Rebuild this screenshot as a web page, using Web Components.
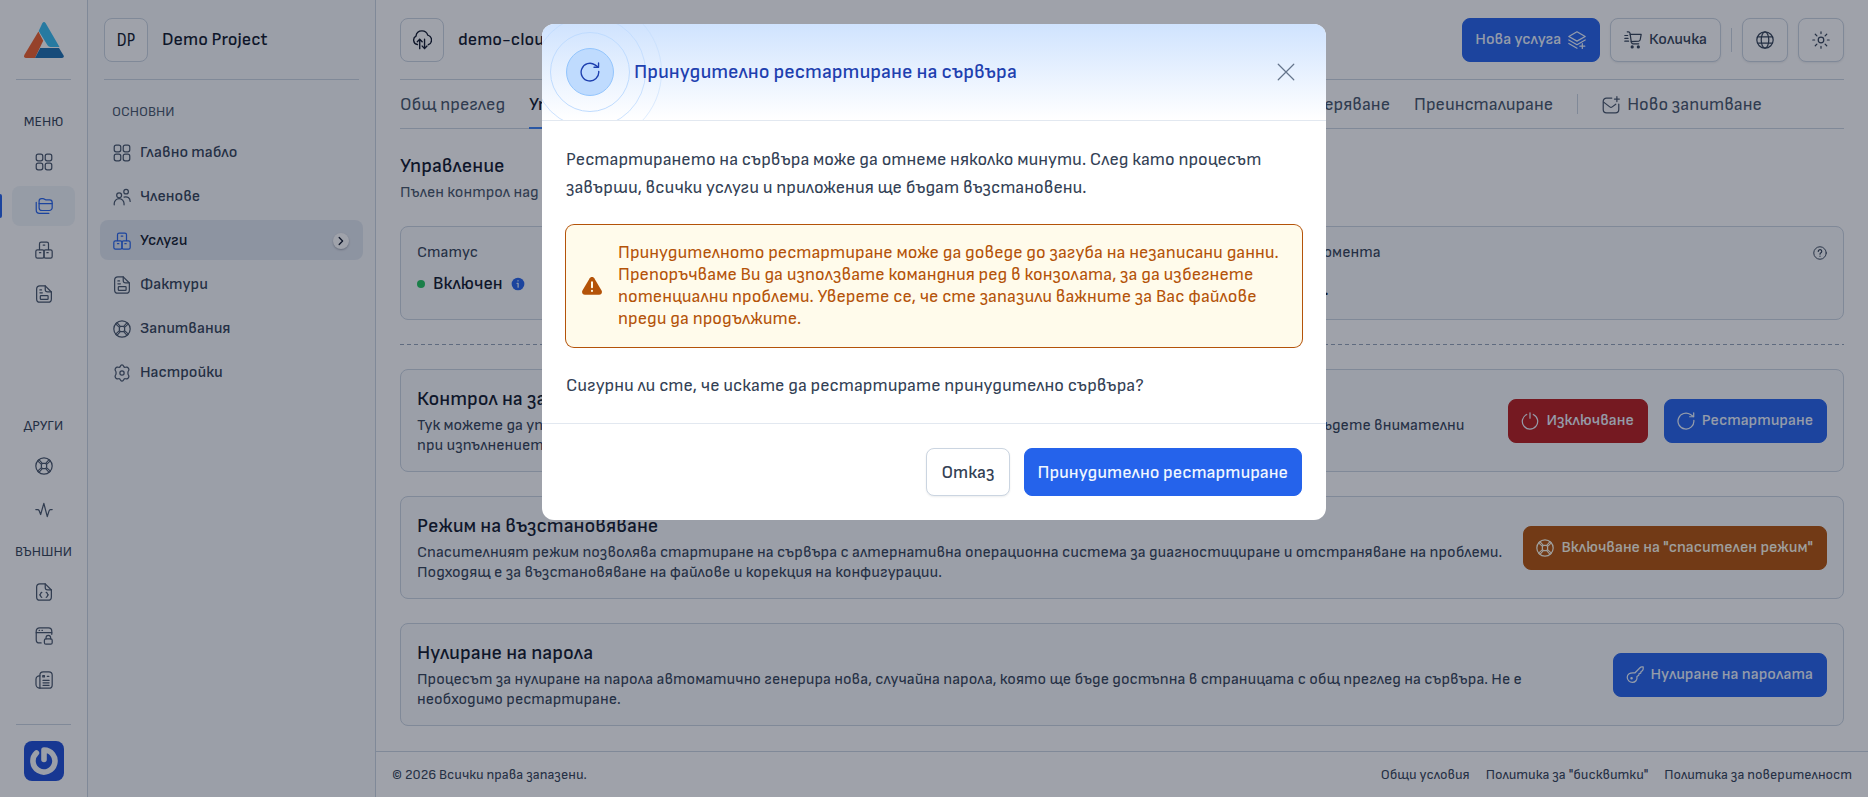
<!DOCTYPE html>
<html lang="bg">
<head>
<meta charset="utf-8">
<title>Demo Project – Управление</title>
<style>
  :root {
    --slate-50: #f8fafc; --slate-200: #e2e8f0; --slate-300: #cbd5e1; --slate-500: #64748b;
    --slate-600: #475569; --slate-700: #334155; --slate-900: #0f172a;
    --blue: #2563eb; --red: #b91c1c; --amber: #b45309;
  }
  body {
    margin: 0; background: #fff; color: var(--slate-700);
    font: 400 16px/20px "Sofia Sans", Roboto, "Noto Sans", sans-serif;
  }
</style>
</head>
<body>
<app-shell></app-shell>
<confirm-dialog heading="Принудително рестартиране на сървъра">
  <p>Рестартирането на сървъра може да отнеме няколко минути. След като процесът завърши, всички услуги и приложения ще бъдат възстановени.</p>
  <alert-box>Принудителното рестартиране може да доведе до загуба на незаписани данни. Препоръчваме Ви да използвате командния ред в конзолата, за да избегнете потенциални проблеми. Уверете се, че сте запазили важните за Вас файлове преди да продължите.</alert-box>
  <p>Сигурни ли сте, че искате да рестартирате принудително сървъра?</p>
  <ui-button slot="actions" size="lg">Отказ</ui-button>
  <ui-button slot="actions" size="lg" tone="blue">Принудително рестартиране</ui-button>
</confirm-dialog>

<script>
const ICONS = {
  grid: '<rect x="2.5" y="2.5" width="8" height="8" rx="2.4"/><rect x="13.5" y="2.5" width="8" height="8" rx="2.4"/><rect x="2.5" y="13.5" width="8" height="8" rx="2.4"/><rect x="13.5" y="13.5" width="8" height="8" rx="2.4"/>',
  users: '<circle cx="8.5" cy="10" r="3"/><circle cx="17" cy="5.5" r="2.8"/><path d="M2.5 21.5v-1.5a6 6 0 0 1 12 0v1.5"/><path d="M14.5 12.2c4-1.4 7.5 1 7.5 5.3"/>',
  boxes: '<path d="M6.5 11.5V4.5a2 2 0 0 1 2-2h7a2 2 0 0 1 2 2v7"/><path d="M11 6h2"/><rect x="2" y="11.8" width="10" height="10" rx="2"/><rect x="12" y="11.8" width="10" height="10" rx="2"/><path d="M6.5 15.3h1.6M15.5 15.3h1.6"/>',
  invoice: '<path d="M13.5 2H7a4 4 0 0 0-4 4v12a4 4 0 0 0 4 4h10a4 4 0 0 0 4-4V9.5z"/><path d="M13.5 2v4.500a3 3 0 0 0 3 3H21"/><rect x="7.500" y="14" width="9.500" height="4.500" rx=".8"/><path d="M7 7h2M7 10.500h3"/>',
  buoy: '<circle cx="12" cy="12" r="10"/><rect x="8.800" y="8.800" width="6.400" height="6.400" rx="2"/><path d="M5.800 4.200l4.200 4.600M4.200 5.800l4.600 4.200M18.200 4.200L14 8.800M19.800 5.800L15.200 10M5.800 19.800l4.200-4.600M4.200 18.200L8.800 14M18.200 19.800L14 15.200M19.800 18.200L15.200 14" stroke-width="1.300"/>',
  gear: '<path d="M12 2.200c1 0 1.600.5 2 1.500.3.900 1.300 1.500 2.300 1.300l1-.2c1-.2 1.800.2 2.400 1.200l.5.900c.5 1 .4 1.800-.3 2.500-.9.900-.9 4.300 0 5.200.7.700.8 1.500.3 2.500l-.5.900c-.6 1-1.400 1.400-2.400 1.200l-1-.2c-1-.2-2 .4-2.300 1.300-.4 1-1 1.500-2 1.500s-1.600-.5-2-1.500c-.3-.9-1.300-1.500-2.300-1.300l-1 .2c-1 .2-1.800-.2-2.400-1.200l-.5-.9c-.5-1-.4-1.800.3-2.500.9-.9.900-4.300 0-5.200-.7-.7-.8-1.500-.3-2.500l.5-.9c.6-1 1.400-1.400 2.400-1.200l1 .2c1 .2 2-.4 2.300-1.300.4-1 1-1.500 2-1.500z"/><circle cx="12" cy="12" r="2.600"/>',
  folders: '<path d="M6 9.500V6a3 3 0 0 1 3-3h1.800c1.800 0 2 1.600 3.600 1.600H19a3 3 0 0 1 3 3V14a3.500 3.500 0 0 1-3.500 3.500h-9A3.500 3.500 0 0 1 6 14z"/><path d="M6 9h16"/><path d="M2.500 7.500V17a4 4 0 0 0 4 4H18"/>',
  pulse: '<path d="M2 11.500h2.200c.9 0 1.500.4 1.800 1.200l1.900 4.800L11.800 4l4.200 16 2.200-7c.3-1 .9-1.500 1.800-1.500h2"/>',
  code: '<path d="M13.500 2H7a4 4 0 0 0-4 4v12a4 4 0 0 0 4 4h10a4 4 0 0 0 4-4V9.500z"/><path d="M13.500 2v4.500a3 3 0 0 0 3 3H21"/><path d="M9.300 12.500c-1.500 0-1 2.200-2.500 3 1.500.8 1 3 2.500 3M14.700 12.500c1.500 0 1 2.200 2.500 3-1.500.8-1 3-2.500 3"/>',
  winlock: '<path d="M8.500 20.500H6.500a4 4 0 0 1-4-4V6a4 4 0 0 1 4-4h11a4 4 0 0 1 4 4v4"/><path d="M2.500 8h19M6 5h.6M9.500 5h.6"/><rect x="12.500" y="15.500" width="9.500" height="6.500" rx="1.800"/><path d="M14.500 15.500V14a2.800 2.800 0 0 1 5.600 0v1.500"/>',
  news: '<path d="M7 22h11a4 4 0 0 0 4-4V6a4 4 0 0 0-4-4h-7a4 4 0 0 0-4 4v16z"/><path d="M7 22a4.800 4.800 0 0 1-4.800-4.800V11A4 4 0 0 1 7 7"/><path d="M10.800 12.500h7.400M10.800 15.500h7.400M10.800 18.500h7.400M16 7.500h2"/><path d="M10.500 6.500h2v1.800h-2z"/>',
  cloud: '<path d="M7 17a5 5 0 0 1-1.600-9.300C5.800 4.300 8.500 2 12 2c3 0 5.500 1.900 6.300 4.600A5.600 5.600 0 0 1 19 17.200"/><path d="M9.500 21.500V11.200M6.800 14l2.700-2.800L12.200 14M14.800 11.200v10.300M12.200 18.700l2.600 2.800 2.700-2.800"/>',
  layers: '<path d="M12 2l10 5.700-10 5.700L2 7.700z"/><path d="M2 12l10 5.700L22 12"/><path d="M2 16.300L12 22M18.500 16.500v6M15.500 19.500h6"/>',
  cart: '<path d="M5 2h1.500c1 0 1.600.6 1.800 1.600L10 15c.2 1 .8 1.600 1.800 1.600H19"/><path d="M8.600 5.200H22l-1.200 6.500c-.2 1-.8 1.500-1.800 1.600L9.800 14"/><path d="M2 6.500h3.500M2 10h4M2 13.500h4.600"/><circle cx="11" cy="20.500" r="1.200" fill="currentColor"/><circle cx="18.500" cy="20.500" r="1.200" fill="currentColor"/>',
  globe: '<circle cx="12" cy="12" r="10"/><ellipse cx="12" cy="12" rx="4.600" ry="10"/><path d="M3.200 8.300h17.600M3.200 15.700h17.600"/>',
  sun: '<circle cx="12" cy="12" r="3.400"/><path d="M12 2v2.200M12 19.800V22M2 12h2.200M19.800 12H22M5 5l2 2M17 17l2 2M19 5l-2 2M7 17l-2 2"/>',
  mail: '<path d="M13 3.500H6.500A4 4 0 0 0 2.500 7.500v10a4 4 0 0 0 4 4h11a4 4 0 0 0 4-4V11"/><path d="M3 8.500l7.500 5.800c1 .8 2 .8 3 0L17.800 11M19.200 1.800v6M16.200 4.800h6"/>',
  help: '<circle cx="12" cy="12" r="9.800"/><path d="M9.300 9.500a2.700 2.700 0 1 1 4.200 2.200c-.9.600-1.500 1-1.500 2.200M12 17v.3" stroke-width="1.800"/>',
  power: '<path d="M12 2v6.500M8 4A9.400 9.400 0 1 0 16 4"/>',
  restart: '<path d="M21.600 11.300A9.700 9.700 0 1 1 17.500 4.200L21 6.600"/><path d="M21.400 2v4.800h-5"/>',
  key: '<path d="M11.800 9.500l6.300-6.300c.7-.7 1.300-1 2.300-1H22v2.300c0 1-.4 1.600-1.100 2.200l-1.500 1.100-.4 2-2 .5-.4 2-2.200 1.600c.6 4.200-2 7.100-5.600 7.100A6.300 6.300 0 0 1 2.500 14.700c0-3.400 2.900-6.200 9.300-5.200z"/><circle cx="7.800" cy="16" r=".8"/>',
  info: '<circle cx="12" cy="12" r="10" fill="currentColor" stroke="none"/><path d="M10.500 11h1.700v6M12 6.800v.4" stroke="#dbeafe" stroke-width="2"/>',
  warning: '<path d="M9.500 3.600c1.200-2 3.800-2 5 0l8 13.400c1.200 2.100-.2 4.600-2.600 4.600H4.100c-2.400 0-3.800-2.500-2.600-4.600z" fill="currentColor" stroke="none"/><path d="M12 8v5.500M12 17.200v.3" stroke="#fffbeb" stroke-width="2.200"/>',
  close: '<path d="M2.500 2.500l19 19M21.500 2.500l-19 19"/>',
  chevron: '<path d="M8 4.500l7.500 7.500L8 19.500" stroke-width="3"/>'
};

/* Registers an element whose open shadow root is filled from render(host). */
function define(tag, css, render) {
  customElements.define(tag, class extends HTMLElement {
    connectedCallback() {
      if (this.shadowRoot) return;
      const tpl = document.createElement('template');
      tpl.innerHTML = `<style>*{box-sizing:border-box}${css}</style>${render(this)}`;
      this.attachShadow({ mode: 'open' }).append(tpl.content.cloneNode(true));
    }
  });
}
const attr = (host, name) => host.getAttribute(name) || '';

define('ui-icon', `
  :host { display: block; width: 18px; height: 18px; flex: none; }
  :host([small]) { width: 14px; height: 14px; }
  :host([large]) { width: 20px; height: 20px; }
  :host([tiny]) { width: 10px; height: 10px; }
  svg { display: block; width: 100%; height: 100%; }`,
  h => `<svg viewBox="1 1 22 22" fill="none" stroke="currentColor" stroke-width="1.5" stroke-linecap="round" stroke-linejoin="round" aria-hidden="true">${ICONS[attr(h, 'name')]}</svg>`);

define('ui-button', `
  :host { display: block; flex: none; }
  button {
    display: flex; align-items: center; gap: 7px; height: 44px; padding: 0 13px;
    border: 1px solid var(--slate-300); border-radius: 8px; background: #fff;
    color: var(--slate-700); font: inherit; font-weight: 500; white-space: nowrap;
    box-shadow: 0 1px 2px rgba(15, 23, 42, .08);
  }
  :host([tone]) button { color: #eff6ff; box-shadow: none; padding: 0 13px 0 12px; }
  :host([tone=blue]) button { background: var(--blue); border-color: var(--blue); }
  :host([tone=red]) button { background: var(--red); border-color: var(--red); }
  :host([tone=amber]) button { background: var(--amber); border-color: var(--amber); color: #fffbeb; }
  :host([size=lg]) button { height: 48px; padding-top: 2px; font-size: 18px; }
  :host([size=lg]:not([tone])) button { padding: 2px 15px 0 14px; }`,
  h => `<button type="button" ${attr(h, 'label') ? `aria-label="${attr(h, 'label')}"` : ''}>${attr(h, 'icon') ? `<ui-icon name="${attr(h, 'icon')}"></ui-icon>` : ''}${attr(h, 'label') ? '' : '<slot></slot>'}${attr(h, 'end-icon') ? `<ui-icon name="${attr(h, 'end-icon')}"></ui-icon>` : ''}</button>`);

define('rail-link', `
  :host { display: block; position: relative; color: var(--slate-600); }
  a { display: flex; height: 40px; align-items: center; justify-content: center; border-radius: 8px; color: inherit; }
  :host([active]) { color: var(--blue); }
  :host([active]) a { background: #f1f5f9; }
  :host([active])::before {
    content: ""; position: absolute; left: -12px; top: 8px; width: 2px; height: 24px;
    background: var(--blue); border-radius: 0 2px 2px 0;
  }`,
  h => `<a href="#" aria-label="${attr(h, 'label')}"><ui-icon name="${attr(h, 'icon')}"></ui-icon></a>`);

define('rail-group', `
  :host { display: flex; flex-direction: column; gap: 4px; }
  span { font-size: 14px; text-align: center; padding-bottom: 6px; }`,
  h => `<span>${attr(h, 'label')}</span><slot></slot>`);

define('app-rail', `
  :host { display: flex; flex-direction: column; padding: 20px 12px 16px; border-right: 1px solid var(--slate-300); }
  .logo { display: block; width: 40px; height: 40px; margin: 0 auto 19px; }
  svg { display: block; width: 100%; height: 100%; }
  hr { margin: 0 4px; border: 0; border-top: 1px solid var(--slate-300); flex: none; }
  .top { margin-top: 32px; }
  .bottom { margin-top: auto; padding-top: 16px; display: flex; flex-direction: column; gap: 12px; margin-bottom: 24px; }
  .user { display: block; width: 40px; height: 40px; margin: 16px auto 0; border-radius: 8px; overflow: hidden; }`,
  () => `
  <a class="logo" href="#" aria-label="Начало"><svg viewBox="0 0 40 40">
    <path d="M18.300 3.200Q20 .8 21.700 3.200L35.500 27H26.500Q24.500 27 23.500 25.200L14.700 11z" fill="#38bdf0"/>
    <path d="M14.400 11.400l4.800 9.400L11 38H1.800Q-.6 37.800.3 35z" fill="#f0602a"/>
    <path d="M16.200 28h18.800l4.600 7.600Q40.400 37.800 38 38H11z" fill="#1b6fb0"/></svg></a>
  <hr>
  <rail-group class="top" label="МЕНЮ">
    <rail-link icon="grid" label="Табло"></rail-link>
    <rail-link icon="folders" label="Проекти" active></rail-link>
    <rail-link icon="boxes" label="Услуги"></rail-link>
    <rail-link icon="invoice" label="Фактури"></rail-link>
  </rail-group>
  <div class="bottom">
    <rail-group label="ДРУГИ">
      <rail-link icon="buoy" label="Запитвания"></rail-link>
      <rail-link icon="pulse" label="Активност"></rail-link>
    </rail-group>
    <rail-group label="ВЪНШНИ">
      <rail-link icon="code" label="API"></rail-link>
      <rail-link icon="winlock" label="Сигурност"></rail-link>
      <rail-link icon="news" label="Новини"></rail-link>
    </rail-group>
  </div>
  <hr>
  <a class="user" href="#" aria-label="Профил"><svg viewBox="0 0 40 40"><rect width="40" height="40" fill="#1d4ed8"/>
    <path d="M12.400 12A11 11 0 1 0 20 9v9.500" fill="none" stroke="#f8fafc" stroke-width="5.600" stroke-linecap="round" stroke-linejoin="round"/></svg></a>`);

define('side-link', `
  :host { display: block; color: var(--slate-700); }
  a {
    display: flex; align-items: center; gap: 9px; height: 40px; padding: 1px 14px 0 13px;
    border-radius: 8px; color: inherit; font-weight: 500; text-decoration: none;
  }
  ui-icon { color: var(--slate-600); }
  i { display: flex; align-items: center; justify-content: center; width: 16px; height: 16px; margin-left: auto; border-radius: 50%; background: #fff; box-shadow: 0 1px 2px rgba(15, 23, 42, .3); }
  i ui-icon { color: var(--slate-900); }
  :host([active]) { color: var(--slate-900); }
  :host([active]) a { background: var(--slate-200); }
  :host([active]) a > ui-icon { color: var(--blue); }`,
  h => `<a href="#"><ui-icon name="${attr(h, 'icon')}"></ui-icon><slot></slot>${h.hasAttribute('active') ? '<i><ui-icon tiny name="chevron"></ui-icon></i>' : ''}</a>`);

define('title-tile', `
  :host { display: flex; align-items: center; gap: 14px; height: 44px; color: var(--slate-900); font-size: 18px; font-weight: 500; }
  span { display: flex; align-items: center; justify-content: center; width: 44px; height: 44px; border: 1px solid var(--slate-300); border-radius: 8px; background: #fff; font-weight: 400; }`,
  () => `<span><slot name="badge"></slot></span><slot></slot>`);

define('app-sidebar', `
  :host { display: block; padding: 18px 12px; background: var(--slate-50); border-right: 1px solid var(--slate-300); }
  title-tile { margin: 0 4px 17px; }
  .initials { font-family: "Sofia Sans Condensed", "Sofia Sans", Roboto, sans-serif; font-size: 20px; font-weight: 400; }
  hr { margin: 0 4px 22px; border: 0; border-top: 1px solid var(--slate-300); }
  h2 { margin: 0 12px 10px; font-size: 14px; font-weight: 400; color: var(--slate-600); }
  nav { display: flex; flex-direction: column; gap: 4px; }`,
  () => `
  <title-tile><span slot="badge" class="initials">DP</span>Demo Project</title-tile>
  <hr>
  <h2>ОСНОВНИ</h2>
  <nav>
    <side-link icon="grid">Главно табло</side-link>
    <side-link icon="users">Членове</side-link>
    <side-link icon="boxes" active>Услуги</side-link>
    <side-link icon="invoice">Фактури</side-link>
    <side-link icon="buoy">Запитвания</side-link>
    <side-link icon="gear">Настройки</side-link>
  </nav>`);

define('app-topbar', `
  :host { display: flex; align-items: center; gap: 10px; padding: 18px 0 17px; border-bottom: 1px solid var(--slate-300); }
  title-tile { flex: 1; }
  i { width: 1px; height: 24px; background: var(--slate-300); }`,
  () => `
  <title-tile><ui-icon large slot="badge" name="cloud"></ui-icon>demo-cloud-server</title-tile>
  <ui-button tone="blue" end-icon="layers">Нова услуга</ui-button>
  <ui-button icon="cart">Количка</ui-button>
  <i></i>
  <ui-button icon="globe" label="Език"></ui-button>
  <ui-button icon="sun" label="Тема"></ui-button>`);

define('app-tabs', `
  :host { display: block; border-bottom: 1px solid var(--slate-300); }
  nav { display: flex; align-items: center; gap: 24px; height: 48px; font-size: 18px; white-space: nowrap; }
  a { display: flex; align-items: center; gap: 7px; height: 49px; margin-bottom: -1px; color: var(--slate-600); text-decoration: none; border-bottom: 2px solid transparent; border-top: 2px solid transparent; }
  a.on { color: var(--slate-900); font-weight: 500; border-bottom-color: #3b82f6; }
  i { width: 1px; height: 20px; background: var(--slate-300); }`,
  () => `<nav>
    <a href="#">Общ преглед</a><a href="#" class="on">Управление</a><a href="#">Статистика</a>
    <a href="#">Трафик</a><a href="#">Защитна стена</a><a href="#">Резервни копия</a><a href="#">Архиви</a>
    <a href="#">Преразмеряване</a><a href="#">Преинсталиране</a><i></i>
    <a href="#"><ui-icon name="mail"></ui-icon>Ново запитване</a></nav>`);

define('stat-card', `
  :host { display: block; min-height: 94px; box-sizing: border-box; padding: 16px 16px 15px; border: 1px solid var(--slate-300); border-radius: 8px; background: var(--slate-50); }
  header { display: flex; align-items: center; justify-content: space-between; }
  div { display: flex; align-items: center; gap: 8px; margin-top: 7px; font-size: 18px; line-height: 28px; color: var(--slate-900); font-weight: 500; }
  :host([help]) div { margin-top: 13px; }`,
  h => `<header><span>${attr(h, 'label')}</span>${h.hasAttribute('help') ? '<ui-icon small name="help"></ui-icon>' : ''}</header><div><slot></slot></div>`);

define('action-card', `
  :host { display: flex; align-items: center; gap: 16px; padding: 16px 16px 15px; border: 1px solid var(--slate-300); border-radius: 8px; background: var(--slate-50); }
  section { flex: 1; margin-right: 4px; }
  h3 { margin: 0 0 4px; font-size: 20px; line-height: 26px; font-weight: 500; color: var(--slate-900); }
  p { margin: 0; }`,
  h => `<section><h3>${attr(h, 'heading')}</h3><p><slot></slot></p></section><slot name="action"></slot>`);

define('app-footer', `
  :host { display: flex; gap: 16px; align-items: center; height: 46px; padding: 0 16px; border-top: 1px solid var(--slate-300); font-size: 14px; }
  span { flex: 1; }
  a { color: inherit; text-decoration: none; }`,
  () => `<span>© 2026 Всички права запазени.</span><a href="#">Общи условия</a><a href="#">Политика за "бисквитки"</a><a href="#">Политика за поверителност</a>`);

define('server-page', `
  :host { display: flex; flex-direction: column; }
  main { flex: 1; padding: 0 24px 24px; }
  .intro { padding: 24px 0 23px; }
  h1 { margin: 0 0 4px; font-size: 20px; line-height: 26px; font-weight: 500; color: var(--slate-900); }
  p { margin: 0; color: var(--slate-600); }
  .stats { display: grid; grid-template-columns: 1fr 1fr; gap: 24px; }
  .dot { width: 8px; height: 8px; border-radius: 50%; background: #22c55e; }
  .info { color: var(--blue); }
  .rule { margin: 24px 0; height: 1px; background: repeating-linear-gradient(90deg, #94a3b8 0 4px, transparent 4px 7px); }
  .cards { display: flex; flex-direction: column; gap: 24px; }`,
  () => `
  <main>
    <app-topbar></app-topbar>
    <app-tabs></app-tabs>
    <div class="intro"><h1>Управление</h1><p>Пълен контрол над сървъра.</p></div>
    <div class="stats">
      <stat-card label="Статус"><span class="dot"></span>Включен<ui-icon small class="info" name="info"></ui-icon></stat-card>
      <stat-card help label="Използван ресурс към момента">Няма данни за заявки.</stat-card>
    </div>
    <div class="rule"></div>
    <div class="cards">
      <action-card heading="Контрол на захранването">Тук можете да управлявате захранването на сървъра. Някои действия водят до временно прекъсване на услуги и затова бъдете внимателни при изпълнението им.
        <ui-button slot="action" tone="red" icon="power">Изключване</ui-button>
        <ui-button slot="action" tone="blue" icon="restart">Рестартиране</ui-button></action-card>
      <action-card heading="Режим на възстановяване">Спасителният режим позволява стартиране на сървъра с алтернативна операционна система за диагностициране и отстраняване на проблеми. Подходящ е за възстановяване на файлове и корекция на конфигурации.
        <ui-button slot="action" tone="amber" icon="buoy">Включване на "спасителен режим"</ui-button></action-card>
      <action-card heading="Нулиране на парола">Процесът за нулиране на парола автоматично генерира нова, случайна парола, която ще бъде достъпна в страницата с общ преглед на сървъра. Не е необходимо рестартиране.
        <ui-button slot="action" tone="blue" icon="key">Нулиране на паролата</ui-button></action-card>
    </div>
  </main>
  <app-footer></app-footer>`);

define('app-shell', `
  :host { display: grid; grid-template-columns: 88px 288px minmax(0, 1fr); min-height: 100vh; }`,
  () => `<app-rail></app-rail><app-sidebar></app-sidebar><server-page></server-page>`);

define('alert-box', `
  :host { display: flex; align-items: center; gap: 16px; margin: 23px 0 25px; padding: 17px 16px; border-radius: 8px; background: #fffbeb; color: var(--amber); box-shadow: 0 0 0 1px var(--amber); line-height: 22px; }`,
  () => `<ui-icon large name="warning"></ui-icon><span><slot></slot></span>`);

define('confirm-dialog', `
  :host { position: fixed; inset: 0; display: flex; justify-content: center; align-items: flex-start; padding: 24px; background: rgba(15, 23, 42, .4); }
  [role=dialog] { width: 784px; max-width: 100%; border-radius: 12px; background: #fff; overflow: hidden; font-size: 18px; line-height: 28px; }
  header { display: flex; align-items: center; gap: 20px; height: 97px; padding: 0 24px; border-bottom: 1px solid var(--slate-200); background: linear-gradient(#cfe3fe, #fff); overflow: hidden; }
  .mark { position: relative; display: flex; align-items: center; justify-content: center; width: 48px; height: 48px; border: 1px solid #93c5fd; border-radius: 50%; background: #bfdbfe; color: #1e40af; }
  .mark::before, .mark::after, .mark i { content: ""; position: absolute; border: 1px solid #bfdbfe; border-radius: 50%; }
  .mark::before { inset: -17px; }
  .mark::after { inset: -33px; opacity: .8; }
  .mark i { inset: -49px; opacity: .5; }
  h2 { flex: 1; margin: 0; font-size: 20px; font-weight: 500; color: #1e40af; position: relative; }
  .close { padding: 7px; border: 0; background: none; color: var(--slate-500); }
  .body { padding: 25px 24px 23px; border-bottom: 1px solid var(--slate-200); }
  ::slotted(p) { margin: 0; }
  footer { display: flex; justify-content: flex-end; gap: 14px; padding: 24px; }`,
  h => `<div role="dialog" aria-modal="true" aria-labelledby="t">
    <header><span class="mark"><ui-icon large name="restart"></ui-icon><i></i></span><h2 id="t">${attr(h, 'heading')}</h2>
      <button class="close" type="button" aria-label="Затвори"><ui-icon name="close"></ui-icon></button></header>
    <div class="body"><slot></slot></div>
    <footer><slot name="actions"></slot></footer></div>`);
</script>
</body>
</html>
